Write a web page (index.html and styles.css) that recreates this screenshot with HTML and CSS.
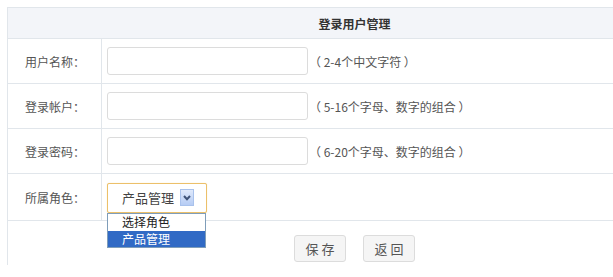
FILE: index.html
```html
<!DOCTYPE html>
<html lang="zh-CN">
<head>
  <meta charset="UTF-8">
  <title>登录用户管理</title>
  <link rel="stylesheet" href="styles.css">
</head>
<body>
  <div class="wrap">
    <table class="form-table">
      <tr class="head-row">
        <th colspan="2">登录用户管理</th>
      </tr>
      <tr>
        <td class="label">用户名称：</td>
        <td class="field"><input type="text" class="text-input"><span class="hint">（ 2-4个中文字符 ）</span></td>
      </tr>
      <tr>
        <td class="label">登录帐户：</td>
        <td class="field"><input type="text" class="text-input"><span class="hint">（ 5-16个字母、数字的组合 ）</span></td>
      </tr>
      <tr>
        <td class="label">登录密码：</td>
        <td class="field"><input type="password" class="text-input"><span class="hint">（ 6-20个字母、数字的组合 ）</span></td>
      </tr>
      <tr class="role-row">
        <td class="label">所属角色：</td>
        <td class="field">
          <div class="select">
            <span class="select-value">产品管理</span>
            <span class="select-arrow">
              <svg width="8" height="6" viewBox="0 0 8 6"><path d="M1 1 L4 4.2 L7 1" fill="none" stroke="#3f5378" stroke-width="2"/></svg>
            </span>
            <ul class="select-menu">
              <li>选择角色</li>
              <li class="active">产品管理</li>
            </ul>
          </div>
        </td>
      </tr>
      <tr class="foot-row">
        <td colspan="2">
          <div class="actions">
            <button class="btn">保 存</button>
            <button class="btn">返 回</button>
          </div>
        </td>
      </tr>
    </table>
  </div>
</body>
</html>
```

FILE: styles.css
```css
body {
  margin: 0;
  font-family: "Noto Sans CJK SC", "DejaVu Sans", sans-serif;
  font-size: 12px;
  color: #555;
  overflow: hidden;
}

.wrap {
  width: 694px;
  padding: 7px 0 0 7px;
}

.form-table {
  width: 100%;
  border-collapse: collapse;
  border-left: 1px solid #e1e6eb;
  border-top: 1px solid #e1e6eb;
}

.form-table td,
.form-table th {
  padding: 0;
  border-bottom: 1px solid #e1e6eb;
}

.head-row th {
  height: 30px;
  background: #f3f5f9;
  color: #333;
  font-weight: bold;
  text-align: center;
}

.form-table tr td {
  height: 44px;
}

.label {
  width: 76px;
  padding-left: 17px !important;
  border-right: 1px solid #e1e6eb;
  white-space: nowrap;
}

.field {
  padding-left: 5px !important;
}

.text-input {
  width: 201px;
  height: 28px;
  box-sizing: border-box;
  border: 1px solid #dcdcdc;
  border-radius: 3px;
  vertical-align: middle;
  margin: 0;
}

.hint {
  margin-left: 1px;
  vertical-align: middle;
}

.role-row td {
  height: 46px !important;
}

.select {
  position: relative;
  display: flex;
  align-items: center;
  width: 100px;
  height: 30px;
  box-sizing: border-box;
  border: 1px solid #ecc06a;
  box-shadow: 0 0 1px #f3d9a4;
  border-radius: 2px;
  background: #fff;
  margin-top: 1px;
}

.select-value {
  font-size: 13px;
  color: #444;
  margin-left: 14px;
}

.select-arrow {
  display: flex;
  align-items: center;
  justify-content: center;
  width: 12px;
  height: 15px;
  margin-left: 6px;
  border: 1px solid #a9c2ec;
  background: linear-gradient(#dfe9fb, #b6ccf4);
}

.select-menu {
  position: absolute;
  left: -1px;
  top: 29px;
  width: 97px;
  margin: 0;
  padding: 0;
  list-style: none;
  border: 1px solid #7f9db9;
  background: #fff;
  z-index: 2;
}

.select-menu li {
  height: 16px;
  line-height: 16px;
  padding-left: 14px;
  font-size: 12px;
  color: #222;
  overflow: hidden;
}

.select-menu li:first-child {
  height: 17px;
}

.select-menu li.active {
  background: #316ac5;
  color: #fff;
}

.foot-row td {
  height: 60px;
  border-bottom: none;
  vertical-align: top;
}

.actions {
  display: flex;
  justify-content: center;
  gap: 17px;
  padding-top: 14px;
}

.btn {
  width: 52px;
  height: 27px;
  border: 1px solid #dcdcdc;
  border-radius: 3px;
  background: #f5f5f5;
  color: #555;
  font-family: inherit;
  font-size: 13px;
  padding: 0;
}
```
